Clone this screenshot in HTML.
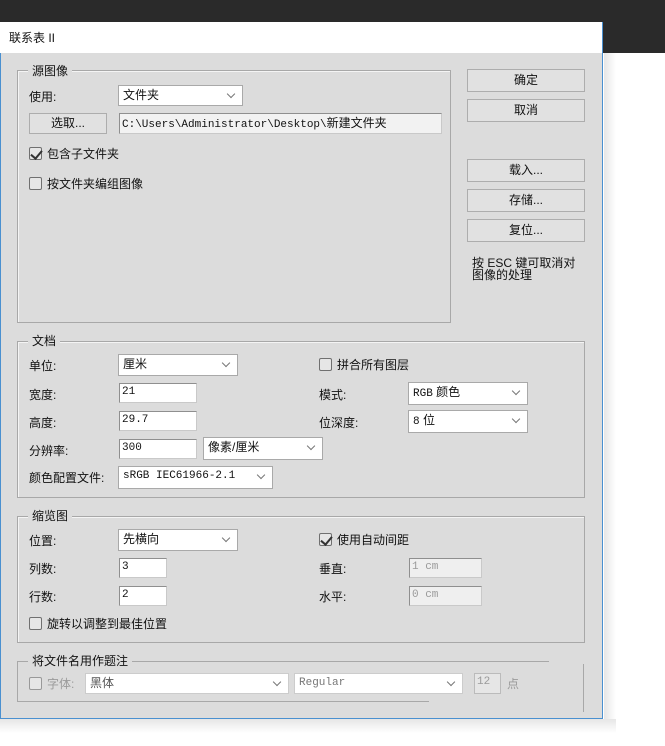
<!DOCTYPE html>
<html><head><meta charset="utf-8"><style>
*{margin:0;padding:0;box-sizing:border-box}
body{width:665px;height:746px;background:#fff;position:relative;overflow:hidden;font-family:"Liberation Sans","Noto Sans CJK SC",sans-serif;font-size:12px;color:#111}
.a{position:absolute}
.lbl{position:absolute;line-height:16px;white-space:nowrap}
.grp{position:absolute;border:1px solid #a8a8a8;box-shadow:inset 1px 1px 0 #f4f4f4}
.gl{position:absolute;background:#dcdcdc;padding:0 4px;line-height:14px;font-size:12px}
.sel{position:absolute;background:#fff;border:1px solid #a9a9a9;line-height:18px;padding-left:4px;white-space:nowrap}
.sel::after{content:"";position:absolute;right:8px;top:5px;width:5px;height:5px;border-right:1px solid #777;border-bottom:1px solid #777;transform:rotate(45deg)}
.inp{position:absolute;background:#fff;border:1px solid #8f8f8f;border-right-color:#c9c9c9;border-bottom-color:#c9c9c9;line-height:16px;padding-left:2px;font-family:"Liberation Mono",monospace;font-size:11px}
.btn{position:absolute;background:#e1e1e1;border:1px solid #adadad;text-align:center;line-height:20px}
.cb{position:absolute;width:13px;height:13px;border:1px solid #707070;background:#e6e6e6;border-radius:2px}
.ck::after{content:"";position:absolute;left:3px;top:0px;width:5px;height:9px;border-right:2px solid #333;border-bottom:2px solid #333;transform:rotate(40deg)}
.mono{font-family:"Liberation Mono",monospace;font-size:11px}
.dis{color:#9a9a9a}
</style></head><body>
<div class="a" style="left:0;top:0;width:665px;height:53px;background:#2a2a2a"></div>
<div class="a" style="left:604px;top:53px;width:12px;height:680px;background:linear-gradient(90deg,#e6e6e6,#fff)"></div>
<div class="a" style="left:0;top:719px;width:616px;height:14px;background:linear-gradient(#e6e6e6,#fff)"></div>
<div class="a" style="left:0;top:22px;width:603px;height:697px;background:#dcdcdc;border:1px solid #4a90d0;border-top:none"></div>
<div class="a" style="left:0;top:22px;width:603px;height:31px;background:#fff;border-right:1px solid #4a90d0"></div>
<div class="lbl" style="left:9px;top:30px;font-size:12px">联系表 II</div>

<!-- 源图像 -->
<div class="grp" style="left:17px;top:70px;width:434px;height:253px"></div>
<div class="gl" style="left:28px;top:64px">源图像</div>
<div class="lbl" style="left:29px;top:89px">使用:</div>
<div class="sel" style="left:118px;top:85px;width:125px;height:21px">文件夹</div>
<div class="btn" style="left:29px;top:113px;width:78px;height:21px;line-height:19px">选取...</div>
<div class="inp" style="left:119px;top:113px;width:323px;height:21px;background:#f2f2f2;line-height:17px">C:\Users\Administrator\Desktop\<span style="font-family:'Noto Sans CJK SC',sans-serif;font-size:12px">新建文件夹</span></div>
<div class="cb ck" style="left:29px;top:147px"></div>
<div class="lbl" style="left:47px;top:146px">包含子文件夹</div>
<div class="cb" style="left:29px;top:177px"></div>
<div class="lbl" style="left:47px;top:176px">按文件夹编组图像</div>

<!-- right buttons -->
<div class="btn" style="left:467px;top:69px;width:118px;height:23px">确定</div>
<div class="btn" style="left:467px;top:99px;width:118px;height:23px">取消</div>
<div class="btn" style="left:467px;top:159px;width:118px;height:23px">载入...</div>
<div class="btn" style="left:467px;top:189px;width:118px;height:23px">存储...</div>
<div class="btn" style="left:467px;top:219px;width:118px;height:23px">复位...</div>
<div class="lbl" style="left:472px;top:257px;line-height:12px">按 ESC 键可取消对<br>图像的处理</div>

<!-- 文档 -->
<div class="grp" style="left:17px;top:341px;width:568px;height:157px"></div>
<div class="gl" style="left:28px;top:334px">文档</div>
<div class="lbl" style="left:29px;top:358px">单位:</div>
<div class="sel" style="left:118px;top:354px;width:120px;height:22px">厘米</div>
<div class="lbl" style="left:29px;top:387px">宽度:</div>
<div class="inp" style="left:119px;top:383px;width:78px;height:20px">21</div>
<div class="lbl" style="left:29px;top:415px">高度:</div>
<div class="inp" style="left:119px;top:411px;width:78px;height:20px">29.7</div>
<div class="lbl" style="left:29px;top:443px">分辨率:</div>
<div class="inp" style="left:119px;top:439px;width:78px;height:20px">300</div>
<div class="sel" style="left:203px;top:437px;width:120px;height:23px">像素/厘米</div>
<div class="lbl" style="left:29px;top:470px">颜色配置文件:</div>
<div class="sel mono" style="left:118px;top:466px;width:155px;height:23px">sRGB IEC61966-2.1</div>
<div class="cb" style="left:319px;top:358px"></div>
<div class="lbl" style="left:337px;top:357px">拼合所有图层</div>
<div class="lbl" style="left:319px;top:387px">模式:</div>
<div class="sel" style="left:408px;top:382px;width:120px;height:23px"><span class="mono">RGB</span> 颜色</div>
<div class="lbl" style="left:319px;top:415px">位深度:</div>
<div class="sel" style="left:408px;top:410px;width:120px;height:23px"><span class="mono">8</span> 位</div>

<!-- 缩览图 -->
<div class="grp" style="left:17px;top:516px;width:568px;height:127px"></div>
<div class="gl" style="left:28px;top:509px">缩览图</div>
<div class="lbl" style="left:29px;top:533px">位置:</div>
<div class="sel" style="left:118px;top:529px;width:120px;height:22px">先横向</div>
<div class="lbl" style="left:29px;top:561px">列数:</div>
<div class="inp" style="left:119px;top:558px;width:48px;height:20px">3</div>
<div class="lbl" style="left:29px;top:589px">行数:</div>
<div class="inp" style="left:119px;top:586px;width:48px;height:20px">2</div>
<div class="cb" style="left:29px;top:617px"></div>
<div class="lbl" style="left:47px;top:616px">旋转以调整到最佳位置</div>
<div class="cb ck" style="left:319px;top:533px"></div>
<div class="lbl" style="left:337px;top:532px">使用自动间距</div>
<div class="lbl" style="left:319px;top:561px">垂直:</div>
<div class="inp dis" style="left:409px;top:558px;width:73px;height:20px;background:#efefef">1 cm</div>
<div class="lbl" style="left:319px;top:589px">水平:</div>
<div class="inp dis" style="left:409px;top:586px;width:73px;height:20px;background:#efefef">0 cm</div>

<!-- 将文件名用作题注 -->
<div class="a" style="left:17px;top:661px;width:532px;border-top:1px solid #a8a8a8"></div>
<div class="a" style="left:17px;top:661px;height:40px;border-left:1px solid #a8a8a8"></div>
<div class="a" style="left:17px;top:701px;width:412px;border-top:1px solid #a8a8a8"></div>
<div class="a" style="left:583px;top:664px;height:48px;border-left:1px solid #a8a8a8"></div>
<div class="gl" style="left:28px;top:654px">将文件名用作题注</div>
<div class="cb" style="left:29px;top:677px;border-color:#999"></div>
<div class="lbl dis" style="left:47px;top:676px">字体:</div>
<div class="sel" style="left:85px;top:673px;width:204px;height:21px;border-color:#ccc;color:#555">黑体</div>
<div class="sel mono" style="left:294px;top:673px;width:169px;height:21px;border-color:#ccc;color:#777">Regular</div>
<div class="inp dis" style="left:474px;top:673px;width:27px;height:21px;background:#e6e6e6;border-color:#bbb">12</div>
<div class="lbl dis" style="left:507px;top:676px">点</div>
</body></html>
